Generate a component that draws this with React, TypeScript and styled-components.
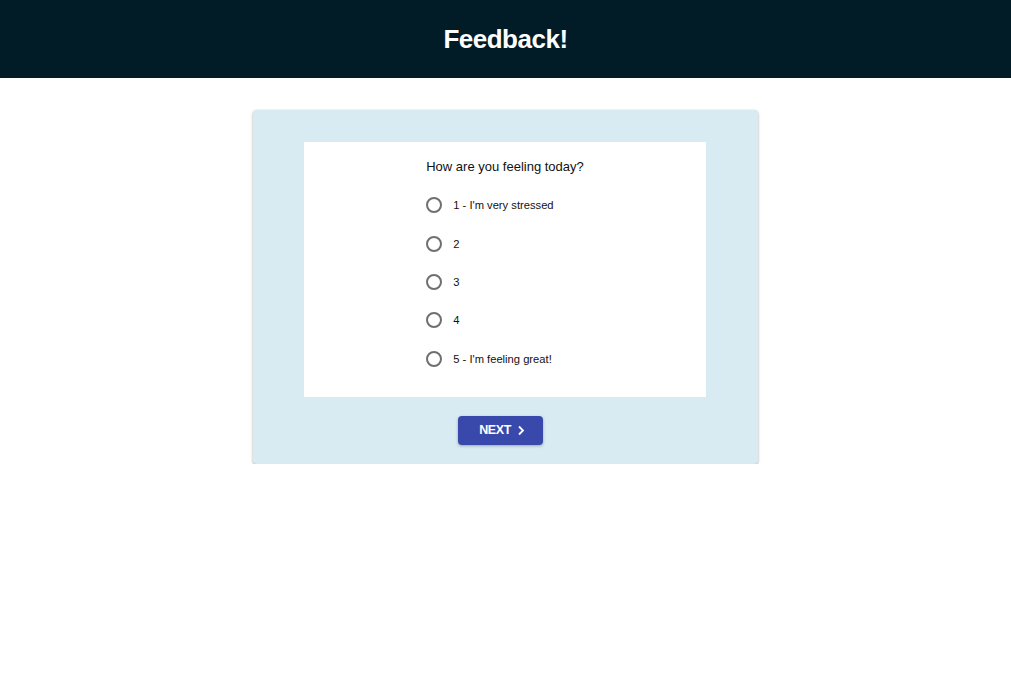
import styled, { createGlobalStyle } from "styled-components";

const GlobalStyle = createGlobalStyle`
  html, body {
    margin: 0;
    padding: 0;
    background: #ffffff;
    font-family: "Liberation Sans", Arial, sans-serif;
  }
`;

const Header = styled.header`
  height: 78px;
  background-color: #011b27;
  display: flex;
  align-items: center;
  justify-content: center;
`;

const Title = styled.h1`
  margin: 0;
  color: #ffffff;
  font-size: 26px;
  font-weight: 700;
  letter-spacing: -0.5px;
`;

const Main = styled.main`
  display: flex;
  justify-content: center;
  padding-top: 32px;
`;

const Card = styled.section`
  width: 505px;
  box-sizing: border-box;
  padding: 32px 52px 19px 51px;
  background-color: #d8ebf2;
  border-radius: 4px;
  box-shadow: 0 1px 3px rgba(0, 0, 0, 0.35);
  display: flex;
  flex-direction: column;
  gap: 19px;
`;

const FormBox = styled.div`
  background: #ffffff;
  display: flex;
  justify-content: center;
  padding: 15px 0 19px;
`;

const Fieldset = styled.div`
  display: flex;
  flex-direction: column;
`;

const Question = styled.div`
  font-size: 13px;
  line-height: 20px;
  color: #111;
  margin-bottom: 9px;
`;

const Option = styled.label`
  display: flex;
  align-items: center;
  gap: 11px;
  height: 38.4px;
  font-size: 11.2px;
  color: #111;
  cursor: pointer;
`;

const Radio = styled.span`
  width: 16px;
  height: 16px;
  box-sizing: border-box;
  border: 2px solid #6f6f6f;
  border-radius: 50%;
`;

const Actions = styled.div`
  display: flex;
  justify-content: center;
  padding-right: 10px;
`;

const NextButton = styled.button`
  width: 85px;
  height: 29px;
  border: none;
  border-radius: 4px;
  background-color: #3848ab;
  color: #ffffff;
  font-family: "Liberation Sans", Arial, sans-serif;
  font-size: 12.5px;
  font-weight: 700;
  letter-spacing: -0.4px;
  display: flex;
  align-items: center;
  justify-content: center;
  gap: 6px;
  padding: 0 0 0 4px;
  box-shadow: 0 1px 3px rgba(0, 0, 0, 0.3);
  cursor: pointer;
`;

const options = ["1 - I'm very stressed", "2", "3", "4", "5 - I'm feeling great!"];

const App = () => {
  return (
    <>
      <GlobalStyle />
      <Header>
        <Title>Feedback!</Title>
      </Header>
      <Main>
        <Card>
          <FormBox>
            <Fieldset>
              <Question>How are you feeling today?</Question>
              {options.map((opt) => (
                <Option key={opt}>
                  <Radio />
                  {opt}
                </Option>
              ))}
            </Fieldset>
          </FormBox>
          <Actions>
            <NextButton>
              NEXT
              <svg width="8" height="11" viewBox="0 0 8 11">
                <path d="M2 1.5 L6 5.5 L2 9.5" fill="none" stroke="#fff" strokeWidth="1.8" />
              </svg>
            </NextButton>
          </Actions>
        </Card>
      </Main>
    </>
  );
};

export default App;
